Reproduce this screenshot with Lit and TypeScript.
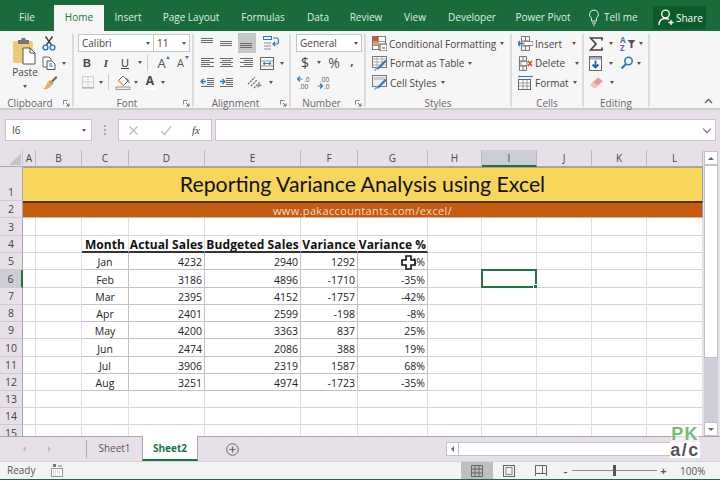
import { LitElement, html, svg, css } from "lit";
import { customElement } from "lit/decorators.js";

const ic = (w: number, h: number, body: any) => html`<svg class="ic" width=${w} height=${h} viewBox="0 0 ${w} ${h}" fill="none">${body}</svg>`;
const svgLines = (rows: number[][], extra: any = "") => html`<svg class="ic" width="16" height="14" viewBox="0 0 16 14" fill="none">
  ${rows.map((r) => svg`<rect x=${r[0]} y=${r[1]} width=${r[2]} height="1" fill="#6a6a6a"></rect>`)}${extra}</svg>`;

const I = {
  paste: ic(26, 28, svg`<rect x="1" y="4" width="20" height="22" rx="2" fill="#eccb76"/><path d="M6 3h3l1-2h3l1 2h3v4H6z" fill="#777"/><path d="M11 11h7l5 5v11H11z" fill="#fff" stroke="#555"/><path d="M18 11v5h5" stroke="#555"/>`),
  cut: ic(14, 15, svg`<path d="M10.5 0.5 4.5 9M3.5 0.5l6 8.500" stroke="#444" stroke-width="1.400"/><circle cx="3.500" cy="11.500" r="2.400" stroke="#2f78b8" stroke-width="1.400"/><circle cx="10.500" cy="11.500" r="2.400" stroke="#2f78b8" stroke-width="1.400"/>`),
  copy: ic(14, 14, svg`<path d="M1 1h6l2 2v8H1z" fill="#fff" stroke="#666"/><path d="M5 5h5l3 3v5.500H5z" fill="#fff" stroke="#555"/><path d="M7 8h3M7 10h4" stroke="#2f78b8"/>`),
  brush: ic(16, 15, svg`<path d="M9 6l5-5 1.500 1.500-5 5z" fill="#666"/><path d="M8 5l3.500 3.500-2 2-3.500-3.500z" fill="#c8a060"/><path d="M5.500 7l4 4c-2 2.500-5 3.500-8.500 3 2-1 3.500-4 4.500-7z" fill="#e3b35c"/>`),
  border: ic(14, 14, svg`<rect x="1.500" y="1.500" width="11" height="11" stroke="#aaa" stroke-dasharray="1 1"/><path d="M7 2v10M2 7h10" stroke="#bbb" stroke-dasharray="1 1"/><path d="M1 13h12" stroke="#999"/>`),
  fill: ic(16, 15, svg`<path d="M8 1l5 5-4.500 4.500-5-5z" fill="#fff" stroke="#666"/><path d="M11 3c2 1 3 3 3 5" stroke="#666"/><path d="M4 5l5 5-1 .500-5-4z" fill="#e8a860"/><rect x="1" y="12" width="14" height="2.500" fill="#eee" stroke="#777" stroke-width=".7"/>`),
  launch: ic(7, 7, svg`<path d="M.5.500h4M.5.500v4" stroke="#888"/><path d="M3 3l3 3M6 3.500V6H3.500" stroke="#666"/>`),
  top: svgLines([[1, 1, 12], [1, 3, 12], [1, 5, 12]]),
  mid: svgLines([[1, 4, 12], [1, 6, 12], [1, 8, 12]]),
  bot: svgLines([[1, 7, 12], [1, 9, 12], [1, 11, 12]]),
  left: svgLines([[1, 2, 13], [1, 4, 9], [1, 6, 13], [1, 8, 9], [1, 10, 13]]),
  center: svgLines([[1, 2, 13], [3, 4, 9], [1, 6, 13], [3, 8, 9], [1, 10, 13]]),
  right: svgLines([[1, 2, 13], [5, 4, 9], [1, 6, 13], [5, 8, 9], [1, 10, 13]]),
  indL: svgLines([[7, 2, 7], [7, 4, 7], [7, 6, 7], [7, 8, 7], [1, 10, 13]], svg`<path d="M6 5.500H1.500M3.500 3 1 5.500 3.500 8" stroke="#2f78b8" stroke-width="1.300"/>`),
  indR: svgLines([[7, 2, 7], [7, 4, 7], [7, 6, 7], [7, 8, 7], [1, 10, 13]], svg`<path d="M1 5.500h4.500M3.500 3 6 5.500 3.500 8" stroke="#2f78b8" stroke-width="1.300"/>`),
  orient: ic(18, 15, svg`<path d="M2 9 9 2M5 11l6-6M8 13l6-6" stroke="#666" stroke-width="1.300" stroke-dasharray="2 1"/><path d="M11 13l5-3-3-1z" fill="#7a6ea8"/>`),
  wrap: ic(17, 15, svg`<rect x=".5" y=".5" width="8" height="3" stroke="#2f78b8"/><path d="M1 7h7M1 10h7M1 13h7" stroke="#888"/><path d="M10 2h4c2 0 2 6 0 6h-4M12 6l-2 2 2 2" stroke="#2f78b8" stroke-width="1.200"/>`),
  merge: ic(15, 13, svg`<rect x=".5" y=".5" width="13" height="12" stroke="#666"/><path d="M1 4h12M1 9h12" stroke="#999"/><path d="M3 6.500h8M5 5 3 6.500 5 8M9 5l2 1.500L9 8" stroke="#2f78b8"/>`),
  decL: ic(14, 13, svg`<path d="M.5 3h5M3 .5.500 3 3 5.500" stroke="#2f78b8" stroke-width="1.200"/><text x="7" y="6" class="mini">.0</text><text x="2" y="12.500" class="mini">.00</text>`),
  decR: ic(14, 13, svg`<text x="3" y="5.500" class="mini">.00</text><path d="M.5 10h5M3 7.500 5.500 10 3 12.500" stroke="#2f78b8" stroke-width="1.200"/><text x="7" y="12.500" class="mini">.0</text>`),
  cond: ic(15, 15, svg`<rect x=".5" y=".5" width="13" height="13" fill="#fff" stroke="#777"/><rect x="1" y="1" width="5" height="4" fill="#d9502a"/><rect x="1" y="5" width="5" height="4" fill="#eea040"/><path d="M6.500 1v12M1 9.500h12M1 5.500h12" stroke="#999"/><rect x="8" y="8" width="7" height="7" fill="#fff" stroke="#555"/><path d="M10 12h3" stroke="#555"/>`),
  table: ic(16, 15, svg`<rect x=".5" y=".5" width="14" height="11" fill="#fff" stroke="#777"/><path d="M1 3h13M1 6h13M1 9h13M5 1v10M10 1v10" stroke="#aaa"/><path d="M15 5 7 13l-2 1 1-3 7-7z" fill="#2f78b8"/><path d="M3 15l3-3-1-1-3 3z" fill="#6aa0d0"/>`),
  cellSt: ic(16, 15, svg`<rect x=".5" y=".5" width="14" height="11" fill="#eee" stroke="#777"/><rect x="2" y="2" width="11" height="3" fill="#ccc"/><path d="M15 5 7 13l-2 1 1-3 7-7z" fill="#2f78b8"/><path d="M3 15l3-3-1-1-3 3z" fill="#6aa0d0"/>`),
  insert: ic(15, 15, svg`<path d="M3.500.500h8v14h-8zM3.500 5h8M3.500 10h8M7.500 1v13" stroke="#777"/><rect x="6" y="5.500" width="9" height="4" fill="#fff" stroke="#888"/><path d="M5 7.500H0M2 5 0 7.500 2 10" stroke="#2f78b8" stroke-width="1.300"/>`),
  del: ic(15, 15, svg`<path d="M1.500.500h7v14h-7zM1.500 5h7M1.500 10h7M5 1v13" stroke="#777"/><rect x="3" y="5.500" width="6" height="4" fill="#fff" stroke="#888"/><path d="M10 5l4 5M14 5l-4 5" stroke="#d9502a" stroke-width="1.500"/>`),
  fmt: ic(15, 15, svg`<rect x=".5" y="4.500" width="12" height="10" fill="#fff" stroke="#666"/><path d="M1 8h11M1 11h11M5 5v9M9 5v9" stroke="#999"/><path d="M1 1.500h13M1 .5v2M14 .5v2" stroke="#2f78b8"/>`),
  sigma: ic(14, 14, svg`<path d="M13 3.500V1H1.500L7 7l-5.500 6H13v-2.500" stroke="#444" stroke-width="1.700"/>`),
  filld: ic(14, 15, svg`<rect x=".5" y=".5" width="12" height="14" fill="#fff" stroke="#666"/><rect x="1" y="1" width="11" height="2.500" fill="#aaa"/><path d="M6.500 4.500v7M3.500 8.500l3 3 3-3" stroke="#1f5f9f" stroke-width="1.800"/>`),
  sort: ic(16, 15, svg`<text x="0" y="6.500" class="az a">A</text><text x="0" y="14.500" class="az z">Z</text><path d="M7.500 4h8l-3 3.500V12h-2V7.500z" fill="#555"/>`),
  find: ic(14, 14, svg`<circle cx="8.500" cy="5" r="3.700" stroke="#2f78b8" stroke-width="1.600"/><path d="M6 8 1.500 12.500" stroke="#2f78b8" stroke-width="2.200"/>`),
  eraser: ic(15, 12, svg`<path d="M9 .5 14 4 6 11.500 1 8z" fill="#ec9a94"/><path d="M1 8l3-3 5 3.500-3 3z" fill="#f4c4c0"/>`),
  bulb: ic(12, 17, svg`<path d="M6 1a4.500 4.500 0 0 0-2.500 8.200V12h5V9.200A4.500 4.500 0 0 0 6 1zM4 14h4M5 16h2" stroke="#e4efe8"/>`),
  user: ic(17, 17, svg`<circle cx="7.500" cy="5" r="3.800" stroke="#fff" stroke-width="1.300"/><path d="M1 16c0-4 2.500-6.500 6.500-6.500 1.500 0 2.500.3 3.500 1" stroke="#fff" stroke-width="1.300"/><path d="M13 11v5M10.500 13.500h5" stroke="#fff" stroke-width="1.300"/>`),
  xx: ic(11, 11, svg`<path d="M1.500 1.500l8 8M9.500 1.500l-8 8" stroke="#bbb" stroke-width="1.300"/>`),
  check: ic(12, 11, svg`<path d="M1 6l3.500 3.500L11 1.500" stroke="#bbb" stroke-width="1.300"/>`),
  plus: ic(13, 13, svg`<circle cx="6.500" cy="6.500" r="5.800" stroke="#666"/><path d="M6.500 3.500v6M3.500 6.500h6" stroke="#666" stroke-width="1.200"/>`),
  macro: ic(12, 13, svg`<rect x=".5" y="4.500" width="11" height="8" fill="#fff" stroke="#999"/><path d="M2 7h8M2 9h8M2 11h8" stroke="#bbb" stroke-dasharray="1 1"/><path d="M2 0h3v3H2z" fill="#777"/><path d="M7 2h4" stroke="#777"/>`),
  vNormal: ic(12, 12, svg`<path d="M.5.500h11v11H.5zM4 1v10M8 1v10M1 4h10M1 8h10" stroke="#666"/>`),
  vPage: ic(12, 12, svg`<rect x=".5" y=".5" width="11" height="11" stroke="#666"/><rect x="3" y="2.500" width="6" height="7" stroke="#888"/>`),
  vBreak: ic(12, 12, svg`<path d="M.5 11V.5h11V11M.5 8.500h11M7.500 1v7" stroke="#666"/>`),
  cursor: ic(15, 15, svg`<path d="M5 1h5v4h4v5h-4v4H5v-4H1V5h4z" fill="#fff" stroke="#111" stroke-width="1.600"/>`),
};

const TABS: [string, string][] = [["File", "w54"], ["Home", "w50 on"], ["Insert", "w48"], ["Page Layout", "w78"], ["Formulas", "w66"], ["Data", "w44"], ["Review", "w52"], ["View", "w46"], ["Developer", "w68"], ["Power Pivot", "w74"]];
const COLS = ["A", "B", "C", "D", "E", "F", "G", "H", "I", "J", "K", "L"];
const DATA: [string, number, number, number, string][] = [
  ["Jan", 4232, 2940, 1292, "44%"], ["Feb", 3186, 4896, -1710, "-35%"], ["Mar", 2395, 4152, -1757, "-42%"], ["Apr", 2401, 2599, -198, "-8%"],
  ["May", 4200, 3363, 837, "25%"], ["Jun", 2474, 2086, 388, "19%"], ["Jul", 3906, 2319, 1587, "68%"], ["Aug", 3251, 4974, -1723, "-35%"],
];
const HEAD = ["Month", "Actual Sales", "Budgeted Sales", "Variance", "Variance %"];

@customElement("app-root")
export class AppRoot extends LitElement {
  static styles = css`
    :host { display: block; position: relative; width: 720px; height: 480px; overflow: hidden; background: #e8e0e9; font-family: "Open Sans", sans-serif; font-size: 10px; color: #444; }
    .app { display: flex; flex-direction: column; height: 480px; }
    .ic { display: block; flex: none; }
    .mini { font: 6.5px "Open Sans", sans-serif; fill: #555; }
    .az { font: 700 8px "Open Sans", sans-serif; }
    .az.a { fill: #2f78b8; } .az.z { fill: #8a4fb0; }
    .dd { display: block; flex: none; width: 0; height: 0; border: 2.5px solid transparent; border-top: 3px solid #555; border-bottom: 0; }
    .title { height: 31px; flex: none; background: #196b3c; display: flex; align-items: flex-end; color: #dfeee5; }
    .tab { height: 26px; display: flex; align-items: center; justify-content: center; box-sizing: border-box; padding-bottom: 2px; font-size: 10px; }
    .tab.on { background: #f6f6f6; color: #1c6e40; }
    .w54 { width: 54px; } .w50 { width: 50px; } .w48 { width: 48px; } .w78 { width: 78px; } .w66 { width: 66px; } .w44 { width: 44px; } .w52 { width: 52px; } .w46 { width: 46px; } .w68 { width: 68px; } .w74 { width: 74px; }
    .tell { width: 73px; height: 26px; padding-bottom: 2px; box-sizing: border-box; display: flex; align-items: center; gap: 4px; padding-left: 8px; font-size: 10px; }
    .share { width: 53px; height: 23px; margin-bottom: 2px; background: #0d5a2a; color: #fff; display: flex; align-items: center; gap: 1px; padding-left: 5px; box-sizing: border-box; font-size: 10px; }

    .ribbon { height: 79px; flex: none; box-sizing: border-box; background: #f6f6f6; border-bottom: 2px solid #cfcbd0; display: flex; position: relative; }
    .group { display: flex; flex-direction: column; box-sizing: border-box; border-right: 2px solid #dcdcdc; margin: 3px 0 1px; position: relative; }
    .gbody { flex: 1; min-height: 0; }
    .glabel { height: 9px; display: flex; align-items: center; justify-content: center; font-size: 10px; color: #666; flex: none; }
    .glabel.pad { padding-right: 12px; }
    .launch { position: absolute; right: 2px; bottom: 0; }
    .clip { width: 74px; } .font { width: 120px; } .align { width: 97px; } .num { width: 75px; } .sty { width: 146px; } .cells { width: 72px; } .edit { width: 66px; }
    .clipb { display: flex; padding-left: 9px; }
    .pastecol { width: 31px; display: flex; flex-direction: column; align-items: center; padding-top: 3px; font-size: 10px; color: #444; }
    .pastecol span { line-height: 14px; margin-left: 1px; }
    .pastecol .dd { margin-top: 6px; }
    .clipr { display: flex; flex-direction: column; padding-left: 2px; }
    .clipr div { height: 19.5px; display: flex; align-items: center; gap: 6px; }
    .fbox { display: flex; margin: 0 0 1px 4px; height: 18px; width: 112px; box-sizing: border-box; border: 1px solid #c6c6c6; background: #fff; font-size: 10px; color: #444; }
    .fbox div { display: flex; align-items: center; justify-content: space-between; padding: 0 3px; box-sizing: border-box; }
    .fname { width: 75px; border-right: 1px solid #c6c6c6; }
    .fsize { flex: 1; }
    .frow { display: flex; align-items: center; height: 19.5px; padding-left: 4px; }
    .vsep { width: 1px; height: 16px; background: #ccc; flex: none; }
    .f-b { font: 700 11px "Liberation Sans", sans-serif; color: #444; width: 18px; text-align: center; }
    .f-i { font: italic 700 11px "Liberation Serif", serif; color: #444; width: 20px; text-align: center; }
    .f-u { font: 11px "Liberation Sans", sans-serif; color: #444; width: 18px; text-align: center; text-decoration: underline; }
    .bigA { font: 13px "Open Sans", sans-serif; color: #555; position: relative; width: 19px; text-align: center; line-height: 16px; }
    .bigA.s { font-size: 11px; }
    .bigA i { position: absolute; right: 1px; top: 1px; width: 0; height: 0; border: 2.5px solid transparent; border-bottom: 3px solid #2f78b8; border-top: 0; }
    .bigA.s i { border-bottom: 0; border-top: 3px solid #2f78b8; }
    .colA { font: 700 12px "Open Sans", sans-serif; color: #444; width: 14px; text-align: center; border-bottom: 2px solid #fff; line-height: 14px; }
    .s3 { width: 3px; flex: none; } .s4 { width: 4px; flex: none; } .s5 { width: 5px; flex: none; } .s6 { width: 6px; flex: none; }
    .agrid { display: grid; grid-template-columns: 19.5px 19.5px 19.5px 30px; grid-auto-rows: 19.5px; padding-left: 4px; align-items: center; justify-items: center; }
    .hot { background: #c6c6c6; width: 18px; height: 20px; display: flex; align-items: center; justify-content: center; margin-top: -1px; }
    .acell { display: flex; align-items: center; gap: 5px; }
    .span2 { grid-column: span 2; justify-self: start; margin-left: 9px; }
    .numbox { margin: 0 0 1px 5px; width: 66px; height: 18px; box-sizing: border-box; border: 1px solid #c6c6c6; background: #fff; display: flex; align-items: center; justify-content: space-between; padding: 0 3px; font-size: 10px; }
    .numr { display: flex; align-items: center; height: 19.5px; padding-left: 7px; }
    .numr.dec { padding-left: 6px; }
    .dollar { font: 14px "Open Sans", sans-serif; color: #444; width: 14px; text-align: center; }
    .pct { font: 14px "Open Sans", sans-serif; color: #555; width: 20px; text-align: center; margin-left: 3px; }
    .comma { font: 700 12px "Open Sans", sans-serif; color: #555; width: 16px; text-align: center; margin-top: -4px; }
    .item { display: flex; align-items: center; height: 19.5px; padding-left: 6px; gap: 2px; font-size: 10px; white-space: nowrap; }
    .item .dd { margin-left: 2px; }
    .item .dd.far { margin-left: 8px; }
    .egrid { display: grid; grid-template-columns: 31px 28px; grid-auto-rows: 19.5px; padding-left: 5px; align-items: center; }
    .ecell { display: flex; align-items: center; gap: 6px; }
    .ecell.g3 { gap: 3px; }
    .collapse { flex: 1; display: flex; align-items: flex-end; justify-content: flex-end; padding: 0 7px 4px 0; }

    .fx { height: 40px; flex: none; box-sizing: border-box; padding: 9px 4px 9px 5px; display: flex; align-items: stretch; }
    .box { background: #fff; border: 1px solid #c9c4cc; box-sizing: border-box; display: flex; align-items: center; }
    .name { width: 87px; justify-content: space-between; padding: 0 5px 0 6px; font-size: 10px; }
    .dots { width: 26px; display: flex; flex-direction: column; align-items: center; justify-content: center; gap: 2px; }
    .dots i { width: 2px; height: 2px; background: #aaa; display: block; }
    .fxbox { width: 94px; justify-content: space-between; padding: 0 11px 0 9px; }
    .fxt { font: italic 11px "Liberation Serif", serif; color: #444; }
    .input { flex: 1; margin-left: 3px; justify-content: flex-end; padding-right: 5px; }
    .chev { width: 5px; height: 5px; border: solid #666; border-width: 0 1.3px 1.3px 0; transform: rotate(45deg); margin-top: -3px; }

    .main { height: 286px; flex: none; display: flex; }
    .sheet { width: 703px; height: 286px; overflow: hidden; display: grid; flex: none; box-sizing: border-box;
      grid-template-columns: 23px 13px 46px 47px 76px 96px 57px 70px 54px 55px 55px 55px 56px;
      grid-template-rows: 17px 34px 17px 18px 17px 17px 18px 17px 17px 17px 18px 17px 17px 17px 17px 17px; }
    .corner { display: flex; align-items: flex-end; justify-content: flex-end; padding: 0 1px 1px 0; border-bottom: 1px solid #a8a8a8; border-right: 1px solid #ccc; box-sizing: border-box; }
    .ch { display: flex; align-items: center; justify-content: center; font-size: 10px; color: #444; box-sizing: border-box; border-right: 1px solid #bdb8c0; border-bottom: 1px solid #a8a8a8; }
    .ch.sel { background: #cdcdd5; border-bottom: 2px solid #217346; }
    .rh { display: flex; align-items: flex-end; justify-content: center; font-size: 10.5px; color: #444; box-sizing: border-box; border-bottom: 1px solid #cfc8d2; border-right: 1px solid #a8a8a8; line-height: 16px; }
    .rh.sel { background: #cdcdd5; border-right: 2px solid #217346; }
    .banner { grid-column: 2 / -1; display: flex; align-items: center; justify-content: center; box-sizing: border-box; font-family: Lato, sans-serif; }
    .b1 { background: #f8d55b; color: #111; font-size: 21.25px; border-top: 1px solid #b0a080; padding-bottom: 1px; border-right: 1px solid #999; }
    .b2 { background: #c55a11; color: #f3dcc8; font-size: 11px; letter-spacing: .35px; border-top: 2px solid #4e3510; border-bottom: 1px solid #e0b090; font-family: "Open Sans", sans-serif; border-right: 1px solid #999; }
    .c { background: #fff; box-sizing: border-box; border-right: 1px solid #e4dde7; border-bottom: 1px solid #d8d2dc; display: flex; align-items: center; padding: 2px 2px 0; font-family: "Open Sans", sans-serif; font-size: 10.5px; color: #222; position: relative; white-space: nowrap; justify-content: flex-end; }
    .c.ctr { justify-content: center; }
    .c.hd { justify-content: center; font-weight: 700; color: #111; border-bottom: 2px solid #333; font-size: 12px; padding: 2px 0 0; letter-spacing: .1px; overflow: visible; }
    .c.t { border-right-color: #c4c0c8; border-bottom-color: #c4c0c8; }
    .sel-box { position: absolute; left: -1px; top: -1px; right: -1px; bottom: -1px; border: 2px solid #217346; box-sizing: border-box; }
    .sel-box i { position: absolute; right: -3px; bottom: -3px; width: 5px; height: 5px; background: #217346; border: 1px solid #fff; box-sizing: border-box; }
    .cursor { position: absolute; left: 401px; top: 255px; }
    .vs { flex: 1; display: flex; flex-direction: column; padding: 1px 2px 0 1px; box-sizing: border-box; }
    .vbtn { height: 14px; flex: none; background: #fff; border: 1px solid #c4c0c8; box-sizing: border-box; display: flex; align-items: center; justify-content: center; }
    .up { width: 0; height: 0; border: 3px solid transparent; border-bottom: 3px solid #666; border-top: 0; }
    .down { width: 0; height: 0; border: 3px solid transparent; border-top: 3px solid #666; border-bottom: 0; }
    .thumb { height: 193px; flex: none; background: #fff; border: 1px solid #c4c0c8; box-sizing: border-box; }
    .track { flex: 1; background: #cdcdd8; }

    .tabs { height: 25px; flex: none; box-sizing: border-box; border-top: 1px solid #a6a6a6; display: flex; align-items: stretch; }
    .nav { width: 87px; display: flex; align-items: center; padding-left: 23px; gap: 22px; box-sizing: border-box; border-right: 1px solid #aaa; margin: 3px 0; }
    .l { width: 0; height: 0; border: 3px solid transparent; border-right: 3px solid #bbb; border-left: 0; }
    .r { width: 0; height: 0; border: 3px solid transparent; border-left: 3px solid #bbb; border-right: 0; }
    .sh { width: 55px; display: flex; align-items: center; justify-content: center; font-size: 10px; color: #555; padding-bottom: 2px; box-sizing: border-box; }
    .sh.on { background: #fff; color: #217346; font-weight: 700; border-bottom: 2px solid #217346; width: 56px; margin-top: -1px; border-left: 1px solid #aaa; border-right: 1px solid #aaa; padding-bottom: 0; }
    .add { width: 70px; display: flex; align-items: center; padding-left: 28px; box-sizing: border-box; }
    .hs { flex: 1; display: flex; align-items: center; padding: 0 20px 0 178px; }
    .hl { width: 13px; height: 14px; box-sizing: border-box; border: 1px solid #c4c0c8; background: #fff; display: flex; align-items: center; justify-content: center; }
    .hl .l { border-right-color: #666; }
    .htrack { flex: 1; height: 14px; background: #fff; border: 1px solid #c4c0c8; box-sizing: border-box; border-left: 0; }

    .status { height: 18px; flex: none; background: #f3f3f3; display: flex; align-items: center; font-size: 10px; border-top: 1px solid #d5d5d5; box-sizing: border-box; }
    .ready { width: 51px; padding: 0 0 2px 7px; box-sizing: border-box; color: #555; }
    .sp { flex: 1; }
    .vb { width: 32px; height: 17px; display: flex; align-items: center; justify-content: center; }
    .vb.on { background: #bfbfbf; }
    .zoombar { display: flex; align-items: center; margin-left: 4px; width: 159px; }
    .mp { width: 9px; font: 700 11px "Open Sans", sans-serif; color: #555; text-align: center; }
    .slider { width: 85px; height: 1px; background: #888; margin: 0 2px; position: relative; }
    .slider i { position: absolute; left: 41px; top: -5px; width: 3px; height: 11px; background: #555; display: block; }
    .pc { color: #555; margin-left: 12px; }
    .bottom { height: 2px; flex: none; background: #1d6a3e; }
    .logo { position: absolute; left: 668px; top: 426px; width: 34px; display: flex; flex-direction: column; align-items: center; font-family: "Liberation Sans", sans-serif; font-weight: 700; line-height: 16px; }
    .logo b { color: #76bb76; font-size: 18px; letter-spacing: 1.3px; background: rgba(255,255,255,.55); }
    .logo span { color: #555; font-size: 18px; letter-spacing: 1.5px; background: #fff; }
  `;

  private cells(r: number) {
    return COLS.map((c, i) => {
      const t = r >= 4 && r <= 12 && i >= 2 && i <= 6;
      if (r === 4 && t) return html`<div class="c hd">${HEAD[i - 2]}</div>`;
      if (t) {
        const d = DATA[r - 5];
        const v = i === 2 ? d[0] : i === 6 ? d[4] : String(d[i - 2]);
        return html`<div class="c t ${i === 2 ? "ctr" : ""}">${v}</div>`;
      }
      const sel = r === 6 && c === "I";
      return html`<div class="c">${sel ? html`<div class="sel-box"><i></i></div>` : ""}</div>`;
    });
  }

  render() {
    const dd = html`<i class="dd"></i>`;
    const launch = html`<span class="launch">${I.launch}</span>`;
    const rows = Array.from({ length: 13 }, (_, k) => k + 3);
    return html`<div class="app">
      <div class="title">
        ${TABS.map(([t, c]) => html`<div class="tab ${c}">${t}</div>`)}
        <div class="tell">${I.bulb}<span>Tell me</span></div>
        <div class="share">${I.user}<span>Share</span></div>
      </div>
      <div class="ribbon">
        <div class="group clip"><div class="gbody clipb">
          <div class="pastecol">${I.paste}<span>Paste</span>${dd}</div>
          <div class="clipr"><div>${I.cut}</div><div>${I.copy}${dd}</div><div>${I.brush}</div></div>
        </div><div class="glabel pad">Clipboard</div>${launch}</div>

        <div class="group font"><div class="gbody">
          <div class="fbox"><div class="fname">Calibri${dd}</div><div class="fsize">11${dd}</div></div>
          <div class="frow"><span class="f-b">B</span><span class="f-i">I</span><span class="f-u">U</span><span class="s4"></span>${dd}<span class="s5"></span><span class="vsep"></span><span class="s4"></span><span class="bigA">A<i></i></span><span class="bigA s">A<i></i></span></div>
          <div class="frow"><span class="s3"></span>${I.border}<span class="s4"></span>${dd}<span class="s5"></span><span class="vsep"></span><span class="s6"></span>${I.fill}<span class="s3"></span>${dd}<span class="s5"></span><span class="colA">A</span><span class="s4"></span>${dd}</div>
        </div><div class="glabel pad">Font</div>${launch}</div>

        <div class="group align"><div class="gbody agrid">
          ${I.top}${I.mid}<div class="hot">${I.bot}</div>${I.wrap}
          ${I.left}${I.center}${I.right}<div class="acell">${I.merge}${dd}</div>
          ${I.indL}${I.indR}<div class="acell span2">${I.orient}${dd}</div>
        </div><div class="glabel pad">Alignment</div>${launch}</div>

        <div class="group num"><div class="gbody">
          <div class="numbox">General${dd}</div>
          <div class="numr"><span class="dollar">$</span><span class="s5"></span>${dd}<span class="pct">%</span><span class="comma">,</span></div>
          <div class="numr dec">${I.decL}<span class="s6"></span>${I.decR}</div>
        </div><div class="glabel pad">Number</div>${launch}</div>

        <div class="group sty"><div class="gbody">
          <div class="item">${I.cond}<span>Conditional Formatting</span>${dd}</div>
          <div class="item">${I.table}<span>Format as Table</span>${dd}</div>
          <div class="item">${I.cellSt}<span>Cell Styles</span>${dd}</div>
        </div><div class="glabel">Styles</div></div>

        <div class="group cells"><div class="gbody">
          <div class="item">${I.insert}<span>Insert</span><i class="dd far"></i></div>
          <div class="item">${I.del}<span>Delete</span><i class="dd far"></i></div>
          <div class="item">${I.fmt}<span>Format</span>${dd}</div>
        </div><div class="glabel">Cells</div></div>

        <div class="group edit"><div class="gbody egrid">
          <div class="ecell">${I.sigma}${dd}</div><div class="ecell g3">${I.sort}${dd}</div>
          <div class="ecell">${I.filld}${dd}</div><div class="ecell g3">${I.find}${dd}</div>
          <div class="ecell">${I.eraser}${dd}</div><div></div>
        </div><div class="glabel">Editing</div></div>

        <div class="collapse"><svg class="ic" width="9" height="6" viewBox="0 0 9 6" fill="none"><path d="M1 5l3.500-3.500L8 5" stroke="#666" stroke-width="1.500"/></svg></div>
      </div>

      <div class="fx">
        <div class="box name">I6${dd}</div>
        <div class="dots"><i></i><i></i><i></i></div>
        <div class="box fxbox">${I.xx}${I.check}<span class="fxt">fx</span></div>
        <div class="box input"><i class="chev"></i></div>
      </div>

      <div class="main">
        <div class="sheet">
          <div class="corner"><svg class="ic" width="12" height="12" viewBox="0 0 12 12"><path d="M12 0v12H0z" fill="#c4c4c4"/></svg></div>
          ${COLS.map((c) => html`<div class="ch ${c === "I" ? "sel" : ""}">${c}</div>`)}
          <div class="rh">1</div><div class="banner b1">Reporting Variance Analysis using Excel</div>
          <div class="rh">2</div><div class="banner b2">www.pakaccountants.com/excel/</div>
          ${rows.map((r) => html`<div class="rh ${r === 6 ? "sel" : ""}">${r}</div>${this.cells(r)}`)}
        </div>
        <div class="vs"><div class="vbtn"><i class="up"></i></div><div class="thumb"></div><div class="track"></div><div class="vbtn"><i class="down"></i></div></div>
      </div>

      <div class="tabs">
        <div class="nav"><i class="l"></i><i class="r"></i></div>
        <div class="sh">Sheet1</div><div class="sh on">Sheet2</div>
        <div class="add">${I.plus}</div>
        <div class="hs"><div class="hl"><i class="l"></i></div><div class="htrack"></div></div>
      </div>

      <div class="status">
        <div class="ready">Ready</div>${I.macro}<div class="sp"></div>
        <div class="vb on">${I.vNormal}</div><div class="vb">${I.vPage}</div><div class="vb">${I.vBreak}</div>
        <div class="zoombar"><span class="mp">-</span><div class="slider"><i></i></div><span class="mp">+</span><span class="pc">100%</span></div>
      </div>
      <div class="bottom"></div>
    </div>
    <div class="cursor">${I.cursor}</div>
    <div class="logo"><b>PK</b><span>a/c</span></div>`;
  }
}
